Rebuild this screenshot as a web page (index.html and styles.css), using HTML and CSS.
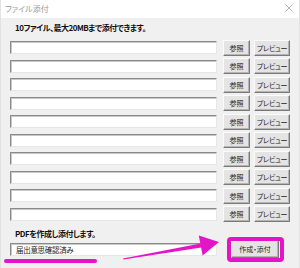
FILE: index.html
```html
<!DOCTYPE html>
<html lang="ja">
<head>
<meta charset="utf-8">
<link rel="stylesheet" href="styles.css">
</head>
<body>
<div class="window">
  <div class="titlebar">
    <span class="title">ファイル添付</span>
    <svg class="close" width="8" height="8" viewBox="0 0 8 8"><path d="M0.5 0.5 L7.5 7.5 M7.5 0.5 L0.5 7.5" stroke="#a8a8a8" stroke-width="0.9" fill="none"/></svg>
  </div>
  <div class="content">
    <div class="heading">10ファイル、最大20MBまで添付できます。</div>
    <div class="rows">
      <div class="row"><div class="field"></div><div class="btn ref">参照</div><div class="btn prev">プレビュー</div></div>
      <div class="row"><div class="field"></div><div class="btn ref">参照</div><div class="btn prev">プレビュー</div></div>
      <div class="row"><div class="field"></div><div class="btn ref">参照</div><div class="btn prev">プレビュー</div></div>
      <div class="row"><div class="field"></div><div class="btn ref">参照</div><div class="btn prev">プレビュー</div></div>
      <div class="row"><div class="field"></div><div class="btn ref">参照</div><div class="btn prev">プレビュー</div></div>
      <div class="row"><div class="field"></div><div class="btn ref">参照</div><div class="btn prev">プレビュー</div></div>
      <div class="row"><div class="field"></div><div class="btn ref">参照</div><div class="btn prev">プレビュー</div></div>
      <div class="row"><div class="field"></div><div class="btn ref">参照</div><div class="btn prev">プレビュー</div></div>
      <div class="row"><div class="field"></div><div class="btn ref">参照</div><div class="btn prev">プレビュー</div></div>
      <div class="row"><div class="field"></div><div class="btn ref">参照</div><div class="btn prev">プレビュー</div></div>
    </div>
    <div class="heading pdf">PDFを作成し添付します。</div>
    <div class="row last"><div class="field filled">届出意思確認済み</div><div class="btn create">作成・添付</div></div>
  </div>
  <svg class="annot" width="300" height="268" viewBox="0 0 300 268">
    <line x1="5" y1="261" x2="94" y2="261" stroke="#e414c8" stroke-width="4" stroke-linecap="round"/>
    <polygon points="122,258.5 199.6,243.5 200.4,247.5 122.4,259.5" fill="#e414c8"/>
    <polygon points="197.8,235.5 218,242 201.6,255.5" fill="#e414c8"/>
    <rect x="228" y="239" width="53" height="21" rx="2" ry="2" fill="none" stroke="#e414c8" stroke-width="4"/>
  </svg>
</div>
</body>
</html>
```
FILE: styles.css
```css
* { box-sizing: border-box; }
html, body { margin: 0; padding: 0; }
body {
  font-family: "Noto Sans CJK JP", "Noto Sans", sans-serif;
  font-feature-settings: "palt";
  background: #f0f0f0;
}
.window {
  position: relative;
  width: 300px;
  height: 268px;
  background: #f0f0f0;
  overflow: hidden;
  border-left: 1px solid #e2e2e2;
  border-right: 1px solid #e2e2e2;
}
.titlebar {
  height: 18px;
  background: #ffffff;
  display: flex;
  align-items: center;
  justify-content: space-between;
  padding: 0 6px 0 4px;
}
.title {
  font-size: 8px;
  color: #9a9a9a;
  line-height: 10px;
}
.close { display: block; margin-top: -2px; }
.content {
  padding-left: 9px;
  display: flex;
  flex-direction: column;
}
.heading {
  margin-top: 4px;
  height: 12px;
  line-height: 12px;
  font-size: 8px;
  font-weight: bold;
  color: #111;
  padding-left: 5px;
  letter-spacing: -0.5px;
  white-space: nowrap;
}
.rows {
  margin-top: 5.5px;
  display: flex;
  flex-direction: column;
  gap: 2.5px;
}
.row {
  display: flex;
  align-items: center;
  height: 16px;
}
.field {
  width: 207px;
  height: 13px;
  flex: none;
  background: #fff;
  border-top: 1px solid #8a8a8a;
  border-left: 1px solid #8a8a8a;
  border-right: 1px solid #e6e6e6;
  border-bottom: 1px solid #e6e6e6;
  box-shadow: inset 1px 1px 0 #c8c8c8;
}
.btn {
  flex: none;
  height: 16px;
  background: #e4e4e4;
  border-top: 1px solid #fbfbfb;
  border-left: 1px solid #fbfbfb;
  border-right: 1px solid #7a7a7a;
  border-bottom: 1px solid #7a7a7a;
  box-shadow: inset -1px -1px 0 #b4b4b4;
  font-size: 7px;
  line-height: 14px;
  text-align: center;
  color: #222;
  white-space: nowrap;
  overflow: hidden;
}
.ref { width: 27px; margin-left: 6px; }
.prev { width: 36px; margin-left: 4px; letter-spacing: -0.3px; }
.heading.pdf { margin-top: 6px; }
.row.last { height: 18px; }
.field.filled {
  font-size: 7.5px;
  line-height: 11px;
  padding-left: 5px;
  color: #222;
  letter-spacing: -0.3px;
  white-space: nowrap;
}
.create {
  width: 48px;
  height: 18px;
  margin-left: 14px;
  line-height: 16px;
}
.annot {
  position: absolute;
  left: 0;
  top: 0;
  pointer-events: none;
}
```
